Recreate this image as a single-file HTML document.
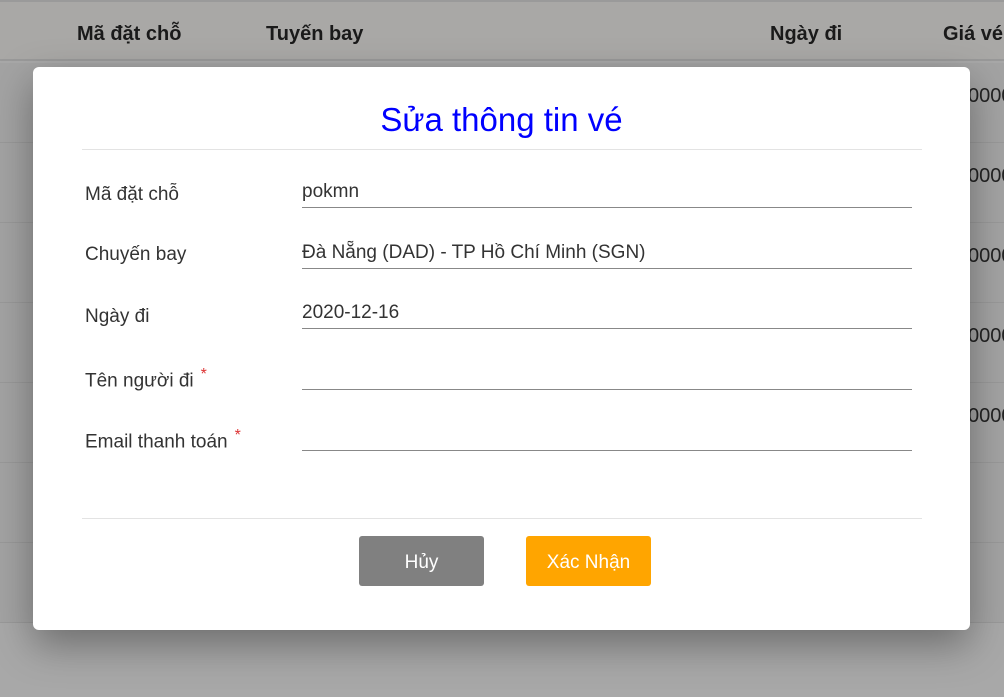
<!DOCTYPE html>
<html><head><meta charset="utf-8"><style>
body{margin:0;width:1004px;height:697px;overflow:hidden;background:#a8a8a8;font-family:"Liberation Sans","DejaVu Sans",sans-serif;position:relative}
.hdr{position:absolute;top:0;left:0;width:1004px;height:61px;background:#a9a8a6;border-bottom:2px solid #999;border-top:2px solid #9a9a9a;box-sizing:border-box}
.hdr span{position:absolute;top:21px;font-weight:bold;font-size:20px;color:#1a1a1a}
.row{position:absolute;left:0;width:1004px;height:79px;border-bottom:1px solid #999;background:#a3a3a3}
.num{position:absolute;left:968px;font-size:20px;color:#222}
.modal{position:absolute;left:33px;top:67px;width:937px;height:563px;background:#fff;border-radius:6px;box-shadow:0 15px 40px rgba(0,0,0,.35)}
h1{position:absolute;top:34px;left:0;width:937px;text-align:center;margin:0;font-size:33px;font-weight:normal;color:#0000ff}
.hr{position:absolute;left:49px;width:840px;height:1px;background:#e3e3e3}
.lbl{position:absolute;left:52px;font-size:19px;color:#333}
.lbl sup{color:#d33;font-size:16px;margin-left:7px}
.inp{position:absolute;left:269px;width:610px;border-bottom:1px solid #888;font-size:19px;color:#333;line-height:25px;box-sizing:border-box;height:29px}
.btn{position:absolute;top:469px;width:125px;height:50px;border-radius:3px;color:#fff;font-size:19px;text-align:center;line-height:54px}
</style></head><body>
<div class="hdr"><span style="left:77px">Mã đặt chỗ</span><span style="left:266px">Tuyến bay</span><span style="left:770px">Ngày đi</span><span style="left:943px">Giá vé</span></div>
<div class="row" style="top:63px"><span class="num" style="top:22px">0000</span></div>
<div class="row" style="top:143px"><span class="num" style="top:22px">0000</span></div>
<div class="row" style="top:223px"><span class="num" style="top:22px">0000</span></div>
<div class="row" style="top:303px"><span class="num" style="top:22px">0000</span></div>
<div class="row" style="top:383px"><span class="num" style="top:22px">0000</span></div>
<div class="row" style="top:463px"></div>
<div class="row" style="top:543px"></div>
<div class="modal">
<h1>Sửa thông tin vé</h1>
<div class="hr" style="top:82px"></div>
<div class="lbl" style="top:117px">Mã đặt chỗ</div><div class="inp" style="top:112px">pokmn</div>
<div class="lbl" style="top:177px">Chuyến bay</div><div class="inp" style="top:173px">Đà Nẵng (DAD) - TP Hồ Chí Minh (SGN)</div>
<div class="lbl" style="top:239px">Ngày đi</div><div class="inp" style="top:233px">2020-12-16</div>
<div class="lbl" style="top:299px">Tên người đi<sup>*</sup></div><div class="inp" style="top:294px"></div>
<div class="lbl" style="top:360px">Email thanh toán<sup>*</sup></div><div class="inp" style="top:355px"></div>
<div class="hr" style="top:451px"></div>
<div class="btn" style="left:326px;background:#808080">Hủy</div>
<div class="btn" style="left:493px;background:#ffa500">Xác Nhận</div>
</div>
</body></html>
